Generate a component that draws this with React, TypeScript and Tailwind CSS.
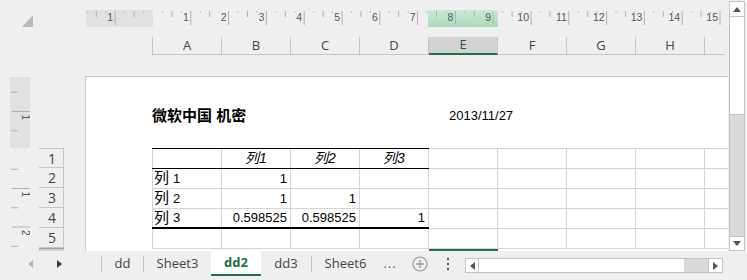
const COLS = [
  { name: 'A', cls: 'w-[70px] border-l' },
  { name: 'B', cls: 'w-[69px]' },
  { name: 'C', cls: 'w-[69px]' },
  { name: 'D', cls: 'w-[69px]' },
  { name: 'E', cls: 'w-[69px]' },
  { name: 'F', cls: 'w-[69px]' },
  { name: 'G', cls: 'w-[69px]' },
  { name: 'H', cls: 'w-[69px]' },
];

// table body: label + three values
const ROWS = [
  ['列 1', '1', '', ''],
  ['列 2', '1', '1', ''],
  ['列 3', '0.598525', '0.598525', '1'],
];

const HRuler = () => {
  const origin = 67;
  const u = 37.8;
  const marks = [];
  for (let k = -8; k <= 64; k++) {
    const x = origin + (k * u) / 4;
    if (x < 0 || x > 640 || k === 0) continue;
    if (k % 4 === 0) {
      marks.push(
        <g key={k}>
          <line x1={x} y1={1} x2={x} y2={15} stroke="#b0b0b0" strokeWidth={1} />
          <text x={x - 2} y={11} fontSize={10.5} fill="#555" textAnchor="end" fontFamily="Liberation Sans, sans-serif">
            {Math.abs(k / 4)}
          </text>
        </g>
      );
    } else if (k % 2 === 0) {
      marks.push(<line key={k} x1={x} y1={1} x2={x} y2={7} stroke="#b0b0b0" strokeWidth={1} />);
    } else {
      marks.push(<line key={k} x1={x} y1={1} x2={x} y2={3} stroke="#c0c0c0" strokeWidth={1} />);
    }
  }
  return (
    <svg width={640} height={17} className="block">
      <defs>
        <linearGradient id="sel" x1="0" y1="0" x2="0" y2="1">
          <stop offset="0" stopColor="#cdeada" />
          <stop offset="1" stopColor="#a9d9ba" />
        </linearGradient>
      </defs>
      <rect x={0} y={0} width={67} height={17} fill="#e1e1e1" />
      <rect x={342} y={0} width={70} height={17} fill="url(#sel)" />
      {marks}
    </svg>
  );
};

const VRuler = () => {
  const origin = 74;
  const u = 38.5;
  const marks = [];
  for (let k = -4; k <= 6; k++) {
    const y = origin + (k * u) / 2;
    if (y < 0 || y > 175 || k === 0) continue;
    if (k % 2 === 0) {
      marks.push(
        <g key={k}>
          <line x1={2} y1={y} x2={20} y2={y} stroke="#b0b0b0" strokeWidth={1} />
          <text
            x={12}
            y={y + 3}
            fontSize={10}
            fill="#555"
            fontFamily="Liberation Sans, sans-serif"
            transform={`rotate(90 12 ${y + 3})`}
          >
            {Math.abs(k / 2)}
          </text>
        </g>
      );
    } else {
      marks.push(<line key={k} x1={1} y1={y} x2={8} y2={y} stroke="#b0b0b0" strokeWidth={1} />);
    }
  }
  return (
    <svg width={20} height={175} className="block">
      <rect x={0} y={1} width={20} height={71} fill="#e1e1e1" />
      {marks}
    </svg>
  );
};

const Tri = ({ dir, color }: { dir: 'up' | 'down' | 'left' | 'right'; color: string }) => {
  const pts = {
    up: '0,5 4,0 8,5',
    down: '0,0 8,0 4,5',
    left: '5,0 5,8 0,4',
    right: '0,0 0,8 5,4',
  }[dir];
  const w = dir === 'up' || dir === 'down' ? 8 : 5;
  const h = dir === 'up' || dir === 'down' ? 5 : 8;
  return (
    <svg width={w} height={h} className="block">
      <polygon points={pts} fill={color} />
    </svg>
  );
};

export default function App() {
  return (
    <div className="w-[747px] h-[280px] overflow-hidden bg-[#efefef] flex flex-col font-['Open_Sans',sans-serif] text-[#444]">
      {/* sheet area */}
      <div className="flex h-[251px]">
        <div className="w-[728px] flex flex-col">
          {/* ruler */}
          <div className="flex h-[27px]">
            <div className="w-[86px] pl-[22px] pt-[15px]">
              <svg width={11} height={12} className="block">
                <polygon points="11,0 11,12 0,12" fill="#b9b9b9" />
              </svg>
            </div>
            <div className="pt-[10px]">
              <HRuler />
            </div>
          </div>

          {/* column headers */}
          <div className="flex h-[18px] mt-[10px] pl-[152px]">
            {COLS.map((c) =>
              c.name === 'E' ? (
                <div
                  key={c.name}
                  className={`${c.cls} flex items-center justify-center bg-[#d3d3d3] border-b-2 border-b-[#217346] border-r border-r-[#c6c6c6] text-[13px] text-[#1f5c3a]`}
                >
                  {c.name}
                </div>
              ) : (
                <div
                  key={c.name}
                  className={`${c.cls} flex items-center justify-center border-r border-b border-[#c6c6c6] text-[13px]`}
                >
                  {c.name}
                </div>
              )
            )}
            <div className="w-[20px] border-b border-[#c6c6c6]" />
          </div>

          {/* rulers, row headers, page */}
          <div className="flex mt-[21px] h-[175px]">
            <div className="w-[10px]" />
            <VRuler />
            <div className="w-[9px]" />
            <div className="w-[25px] flex flex-col pt-[72px]">
              {['1', '2', '3', '4', '5'].map((n, i) => (
                <div
                  key={n}
                  className={`h-[20px] border-r border-b border-[#c6c6c6] flex items-center justify-center pl-[2px] text-[14px] ${i === 0 ? 'border-t' : ''}`}
                >
                  {n}
                </div>
              ))}
              <div className="h-[3px] bg-[#d3d3d3] border-t border-[#9a9a9a]" />
            </div>
            <div className="w-[21px]" />

            {/* page */}
            <div className="flex-1 bg-white border-l border-t border-[#c8c8c8] pl-[66px] overflow-hidden font-['Liberation_Sans','Noto_Sans_CJK_SC',sans-serif] text-black">
              <div className="h-[71px] pt-[29px]">
                <div className="flex items-center h-[20px]">
                  <div className="w-[297px] text-[15px] font-bold">微软中国 机密</div>
                  <div className="text-[13px]">2013/11/27</div>
                </div>
              </div>

              {/* header row */}
              <div className="flex h-[21px]">
                <div className="flex border-t border-b border-black">
                  <div className="w-[70px] border-l border-r border-[#d4d4d4]" />
                  {['列1', '列2', '列3'].map((t) => (
                    <div key={t} className="w-[69px] border-r border-[#d4d4d4] flex items-center justify-center text-[14px] italic">
                      {t}
                    </div>
                  ))}
                </div>
                <div className="flex flex-1 border-t border-b border-[#d4d4d4]">
                  {[0, 1, 2, 3].map((i) => (
                    <div key={i} className="w-[69px] border-r border-[#d4d4d4]" />
                  ))}
                </div>
              </div>

              {ROWS.map((r, ri) => (
                <div key={ri} className="flex h-[20px]">
                  <div className={`flex border-b ${ri === 2 ? 'border-b-2 border-black' : 'border-[#d4d4d4]'}`}>
                    <div className="w-[70px] border-l border-r border-[#d4d4d4] flex items-center pl-[1px]">
                      <span className="text-[15px]">{r[0].slice(0, 1)}</span>
                      <span className="text-[13px] ml-[4px]">{r[0].slice(2)}</span>
                    </div>
                    {r.slice(1).map((v, ci) => (
                      <div key={ci} className="w-[69px] border-r border-[#d4d4d4] flex items-center justify-end pr-[3px] text-[13px]">
                        {v}
                      </div>
                    ))}
                  </div>
                  <div className="flex flex-1 border-b border-[#d4d4d4]">
                    {[0, 1, 2, 3].map((i) => (
                      <div key={i} className="w-[69px] border-r border-[#d4d4d4]" />
                    ))}
                  </div>
                </div>
              ))}

              {/* row 5 */}
              <div className="flex h-[20px] border-b border-[#d4d4d4]">
                <div className="w-[70px] border-l border-r border-[#d4d4d4]" />
                {[0, 1, 2, 3, 4, 5, 6].map((i) => (
                  <div key={i} className="w-[69px] border-r border-[#d4d4d4]" />
                ))}
              </div>
              <div className="flex">
                <div className="ml-[277px] w-[69px] h-[2px] bg-[#217346]" />
              </div>
            </div>
          </div>
        </div>

        {/* vertical scrollbar */}
        <div className="ml-[1px] w-[16px] pt-[1px] flex flex-col">
          <div className="h-[16px] bg-white border border-[#c4c4c4] flex items-center justify-center">
            <Tri dir="up" color="#555" />
          </div>
          <div className="h-[98px] bg-white border-x border-b border-[#c4c4c4]" />
          <div className="flex-1 bg-[#dadada] border-x border-[#c4c4c4]" />
          <div className="h-[15px] bg-white border border-[#c4c4c4] flex items-center justify-center">
            <Tri dir="down" color="#555" />
          </div>
        </div>
      </div>

      {/* sheet tabs */}
      <div className="flex items-start h-[29px] text-[13px]">
        <div className="w-[101px] h-[25px] flex items-center pl-[28px] gap-[24px]">
          <Tri dir="left" color="#b5b5b5" />
          <Tri dir="right" color="#3a3a3a" />
        </div>
        <div className="mt-[5px] w-px h-[16px] bg-[#c6c6c6]" />
        <div className="w-[41px] h-[25px] flex items-center justify-center">dd</div>
        <div className="mt-[5px] w-px h-[16px] bg-[#c6c6c6]" />
        <div className="w-[67px] h-[25px] flex items-center justify-center">Sheet3</div>
        <div className="w-[50px] h-[25px] flex items-center justify-center bg-white border-b-2 border-[#217346] font-bold text-[#217346]">
          dd2
        </div>
        <div className="w-[50px] h-[25px] flex items-center justify-center">dd3</div>
        <div className="mt-[5px] w-px h-[16px] bg-[#c6c6c6]" />
        <div className="w-[67px] h-[25px] flex items-center justify-center">Sheet6</div>
        <div className="w-[22px] h-[25px] flex items-center justify-center text-[#555] tracking-[1px]">...</div>
        <div className="ml-[11px] h-[25px] flex items-center">
          <svg width={16} height={16} className="block">
            <circle cx={8} cy={8} r={7} fill="none" stroke="#9a9a9a" strokeWidth={1.2} />
            <line x1={8} y1={4} x2={8} y2={12} stroke="#9a9a9a" strokeWidth={1.4} />
            <line x1={4} y1={8} x2={12} y2={8} stroke="#9a9a9a" strokeWidth={1.4} />
          </svg>
        </div>
        <div className="ml-[19px] h-[25px] flex flex-col items-center justify-center gap-[3px]">
          <div className="w-[2px] h-[2px] bg-[#555]" />
          <div className="w-[2px] h-[2px] bg-[#555]" />
          <div className="w-[2px] h-[2px] bg-[#555]" />
        </div>
        <div className="ml-[16px] mt-[7px] h-[15px] w-[258px] flex border border-[#c4c4c4] bg-white">
          <div className="w-[13px] border-r border-[#c4c4c4] flex items-center justify-center">
            <Tri dir="left" color="#555" />
          </div>
          <div className="w-[205px] bg-white" />
          <div className="flex-1 bg-[#dadada] border-r border-[#c4c4c4]" />
          <div className="w-[13px] flex items-center justify-center">
            <Tri dir="right" color="#555" />
          </div>
        </div>
      </div>
    </div>
  );
}
